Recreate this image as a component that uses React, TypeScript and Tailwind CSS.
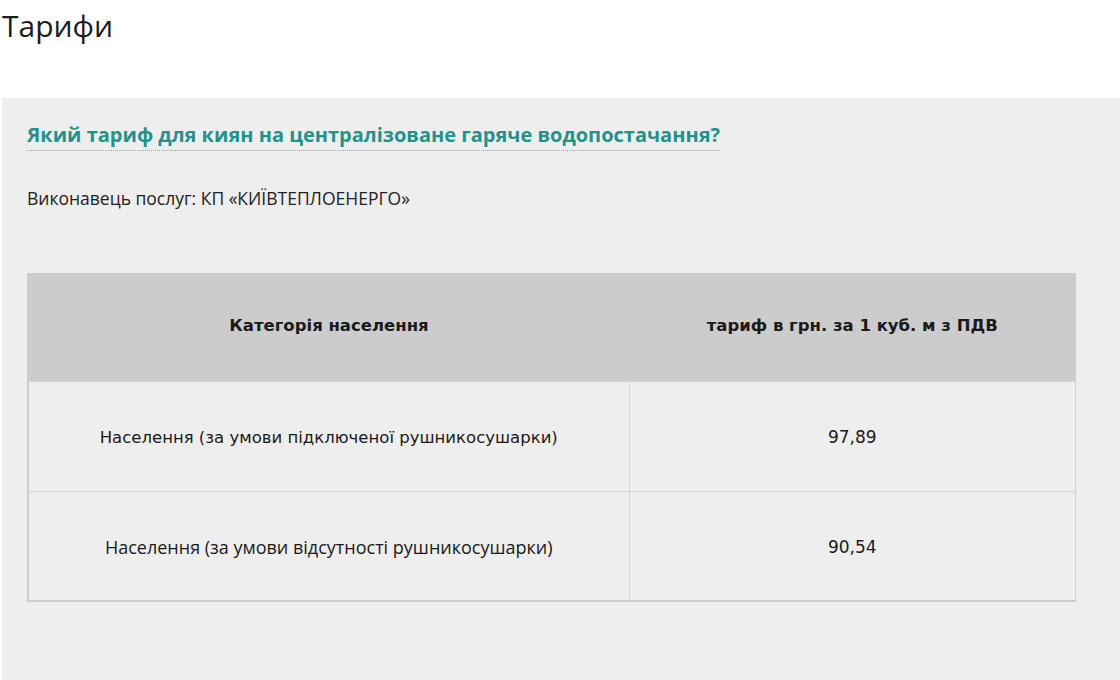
import React from 'react';

const rows = [
  { label: 'Населення (за умови підключеної рушникосушарки)', price: '97,89', narrow: false },
  { label: 'Населення (за умови відсутності рушникосушарки)', price: '90,54', narrow: true },
];

export default function App() {
  return (
    <div className="w-[1120px] h-[680px] overflow-hidden bg-white">
      <h1 className="pl-[2px] pt-[6px] h-[98px] text-[30px] leading-[40px] text-[#1d1d1d] font-['Open_Sans',sans-serif]">
        Тарифи
      </h1>

      <div className="ml-[2px] h-[582px] bg-[#eeeeee] pl-[25px] pr-[44px] pt-[23px]">
        <h2 className="inline-block border-b border-dotted border-[#8aa9a7] pb-[1px] text-[20px] leading-[28px] font-bold text-[#26918b] font-['Open_Sans',sans-serif]">
          Який тариф для киян на централізоване гаряче водопостачання?
        </h2>

        <p className="mt-[35px] text-[17.5px] leading-[24px] text-[#222] font-['Open_Sans',sans-serif]">
          Виконавець послуг: КП «КИЇВТЕПЛОЕНЕРГО»
        </p>

        <table className="mt-[63px] w-[1049px] border-collapse border-l-2 border-b-2 border-[#cccccc] font-['DejaVu_Sans',sans-serif] text-[#1a1a1a]">
          <thead>
            <tr className="h-[108px] bg-[#cccccc]">
              <th className="w-[601px] text-[16.5px] font-bold">Категорія населення</th>
              <th className="text-[16.5px] font-bold">тариф в грн. за 1 куб. м з ПДВ</th>
            </tr>
          </thead>
          <tbody>
            {rows.map((r) => (
              <tr key={r.price} className="h-[110px] border-t border-[#d4d4d4]">
                <td
                  className={
                    r.narrow
                      ? "pt-[4px] text-center border-r border-[#d4d4d4] text-[18px] font-['Open_Sans',sans-serif]"
                      : 'pt-[4px] text-center border-r border-[#d4d4d4] text-[16.5px]'
                  }
                >
                  {r.label}
                </td>
                <td className="pt-[4px] text-center border-r border-[#d4d4d4] text-[17px]">{r.price}</td>
              </tr>
            ))}
          </tbody>
        </table>
      </div>
    </div>
  );
}
